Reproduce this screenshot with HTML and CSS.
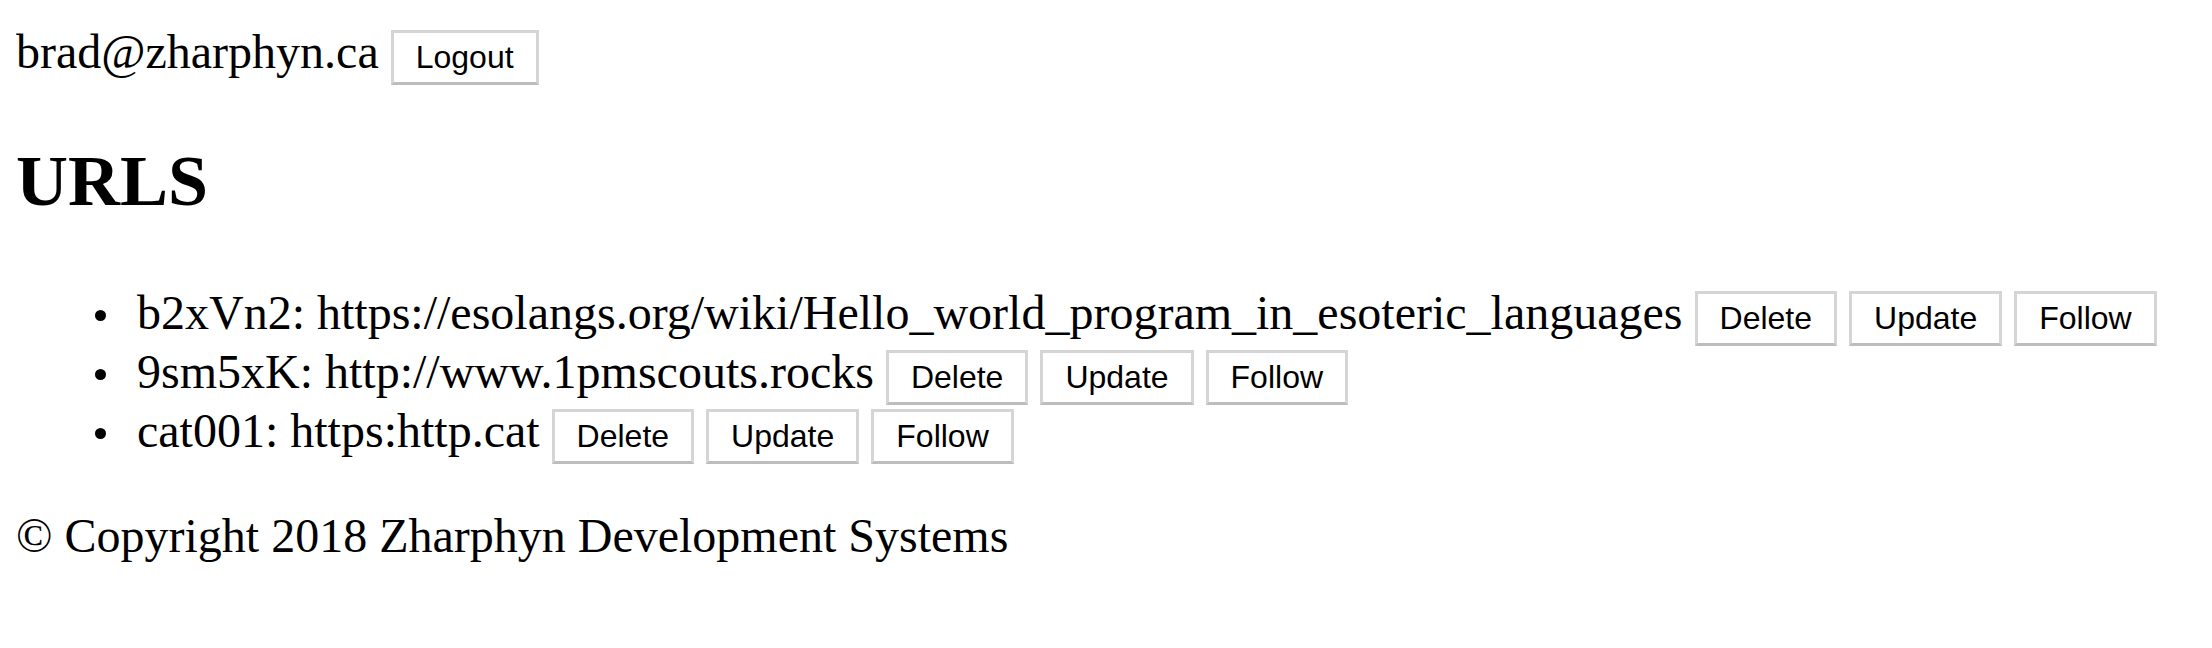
FILE: index.html
```html
<!DOCTYPE html>
<html lang="en">
<head>
<meta charset="utf-8">
<title>URLS</title>
<link rel="stylesheet" href="styles.css">
</head>
<body>
<header class="account">
  <span class="user">brad@zharphyn.ca</span> <button class="btn">Logout</button>
</header>
<h1 class="title">URLS</h1>
<ul class="url-list">
  <li class="url-item">b2xVn2: https://esolangs.org/wiki/Hello_world_program_in_esoteric_languages <button class="btn">Delete</button> <button class="btn">Update</button> <button class="btn">Follow</button></li>
  <li class="url-item">9sm5xK: http://www.1pmscouts.rocks <button class="btn">Delete</button> <button class="btn">Update</button> <button class="btn">Follow</button></li>
  <li class="url-item">cat001: https:http.cat <button class="btn">Delete</button> <button class="btn">Update</button> <button class="btn">Follow</button></li>
</ul>
<footer class="footer">© Copyright 2018 Zharphyn Development Systems</footer>
</body>
</html>
```

FILE: styles.css
```css
html {
  background: #ffffff;
}

body {
  margin: 24px 16px;
  font-family: "Liberation Serif", "Times New Roman", serif;
  font-size: 48px;
  color: #000000;
}

.account {
  display: block;
}

.btn {
  font-family: "Liberation Sans", Arial, sans-serif;
  font-size: 32px;
  color: #000000;
  background: #ffffff;
  padding: 6px 22px;
  margin: 0;
  border: 3px solid #d5d5d5;
  border-bottom-color: #bdbdbd;
  border-radius: 0;
  line-height: normal;
}

.title {
  font-size: 72px;
  font-weight: bold;
  margin: 55px 0 0;
}

.url-list {
  margin: 64px 0 44px;
  padding-left: 121px;
  list-style: none;
}

.url-item {
  line-height: 1.1;
}

.url-item::before {
  content: "";
  display: inline-block;
  width: 11px;
  height: 11px;
  border-radius: 50%;
  background: #000000;
  margin-left: -42px;
  margin-right: 31px;
  vertical-align: 8px;
}

.footer {
  display: block;
}
```
